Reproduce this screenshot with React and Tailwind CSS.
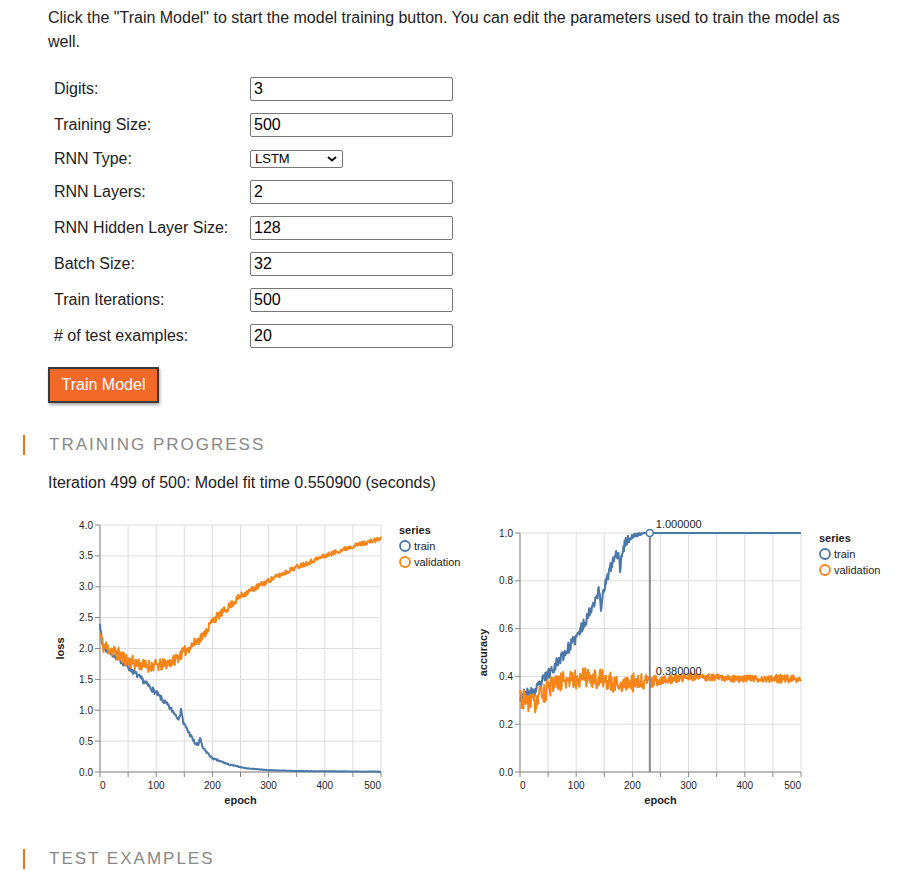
import React from "react";

const BLUE = "#4c78a8";
const ORANGE = "#f58518";

function makeRng(seed) {
  let a = seed;
  return () => {
    a |= 0;
    a = (a + 0x6d2b79f5) | 0;
    let t = Math.imul(a ^ (a >>> 15), 1 | a);
    t = (t + Math.imul(t ^ (t >>> 7), 61 | t)) ^ t;
    return ((t ^ (t >>> 14)) >>> 0) / 4294967296;
  };
}

function interp(keys, e) {
  for (let i = 1; i < keys.length; i++) {
    if (e <= keys[i][0]) {
      const [xa, ya] = keys[i - 1];
      const [xb, yb] = keys[i];
      return ya + ((yb - ya) * (e - xa)) / (xb - xa);
    }
  }
  return keys[keys.length - 1][1];
}

function series(keys, noise, seed, max) {
  const r = makeRng(seed);
  const out = [];
  for (let e = 0; e <= 500; e++) {
    let v = interp(keys, e) + (r() - 0.5) * 2 * interp(noise, e);
    if (max !== undefined) v = Math.min(v, max);
    out.push(Math.max(v, 0));
  }
  return out;
}

const lossTrain = series(
  [[0, 2.45], [3, 2.1], [8, 2.0], [30, 1.86], [60, 1.62], [100, 1.28], [130, 0.98], [142, 0.86], [144, 1.05], [148, 0.8], [170, 0.45], [175, 0.44], [178, 0.56], [182, 0.4], [200, 0.22], [230, 0.12], [260, 0.06], [300, 0.03], [350, 0.015], [500, 0.005]],
  [[0, 0.05], [140, 0.04], [200, 0.015], [260, 0.004], [500, 0.002]],
  7
);
const lossValid = series(
  [[0, 2.25], [5, 2.05], [20, 1.98], [50, 1.8], [80, 1.72], [110, 1.73], [130, 1.8], [150, 1.95], [170, 2.1], [185, 2.22], [200, 2.45], [220, 2.6], [250, 2.85], [300, 3.1], [350, 3.32], [400, 3.5], [450, 3.66], [500, 3.78]],
  [[0, 0.12], [100, 0.1], [200, 0.07], [300, 0.04], [500, 0.035]],
  11
);
const accTrain = series(
  [[0, 0.32], [25, 0.33], [40, 0.38], [60, 0.44], [80, 0.5], [100, 0.56], [120, 0.65], [135, 0.73], [141, 0.76], [144, 0.68], [148, 0.76], [165, 0.88], [174, 0.92], [178, 0.85], [182, 0.93], [190, 0.97], [205, 0.99], [222, 1.0], [500, 1.0]],
  [[0, 0.025], [190, 0.022], [215, 0.004], [225, 0], [500, 0]],
  23,
  1.0
);
const accValid = series(
  [[0, 0.31], [10, 0.3], [25, 0.285], [40, 0.33], [60, 0.36], [80, 0.385], [100, 0.39], [120, 0.4], [150, 0.385], [170, 0.37], [200, 0.375], [230, 0.38], [260, 0.385], [300, 0.4], [350, 0.395], [400, 0.39], [500, 0.39]],
  [[0, 0.045], [200, 0.04], [250, 0.018], [440, 0.014], [470, 0.02], [500, 0.012]],
  31
);

function Chart({ width, x0, x1, yTop, yBot, yMax, yStep, yTitle, titleX, legendX, legendY, train, valid, children }) {
  const sx = (e) => x0 + (e / 500) * (x1 - x0);
  const sy = (v) => yBot - (v / yMax) * (yBot - yTop);
  const path = (data) =>
    data.map((v, i) => `${i ? "L" : "M"}${sx(i).toFixed(2)},${sy(v).toFixed(2)}`).join("");
  const yTicks = [];
  for (let v = 0; v <= yMax + 1e-9; v += yStep) yTicks.push(v);
  const xTicks = [];
  for (let e = 0; e <= 500; e += 50) xTicks.push(e);
  const midY = (yTop + yBot) / 2;

  return (
    <svg width={width} height="305" className="block shrink-0">
      {xTicks.map((e) => (
        <line key={"gx" + e} x1={sx(e)} x2={sx(e)} y1={yTop} y2={yBot} stroke="#ddd" />
      ))}
      {yTicks.map((v) => (
        <line key={"gy" + v} x1={x0} x2={x1} y1={sy(v)} y2={sy(v)} stroke="#ddd" />
      ))}
      <line x1={x0} x2={x0} y1={yTop} y2={yBot} stroke="#888" />
      <line x1={x0} x2={x1} y1={yBot} y2={yBot} stroke="#888" />
      {yTicks.map((v) => (
        <g key={"ty" + v}>
          <line x1={x0 - 5} x2={x0} y1={sy(v)} y2={sy(v)} stroke="#888" />
          <text x={x0 - 7} y={sy(v) + 3.5} textAnchor="end" fontSize="10" fill="#222">
            {v.toFixed(1)}
          </text>
        </g>
      ))}
      {xTicks.map((e) => (
        <line key={"tx" + e} x1={sx(e)} x2={sx(e)} y1={yBot} y2={yBot + 5} stroke="#888" />
      ))}
      {[0, 100, 200, 300, 400, 500].map((e) => (
        <text
          key={"lx" + e}
          x={sx(e)}
          y={yBot + 17}
          textAnchor={e === 0 ? "start" : e === 500 ? "end" : "middle"}
          fontSize="10"
          fill="#222"
        >
          {e}
        </text>
      ))}
      <text x={(x0 + x1) / 2} y={yBot + 32} textAnchor="middle" fontSize="11" fontWeight="bold" fill="#222">
        epoch
      </text>
      <text
        x={titleX}
        y={midY}
        textAnchor="middle"
        fontSize="11"
        fontWeight="bold"
        fill="#222"
        transform={`rotate(-90 ${titleX} ${midY})`}
      >
        {yTitle}
      </text>
      <path d={path(train)} fill="none" stroke={BLUE} strokeWidth="2" strokeLinejoin="round" />
      <path d={path(valid)} fill="none" stroke={ORANGE} strokeWidth="2" strokeLinejoin="round" />
      {children && children(sx, sy)}
      <text x={legendX} y={legendY} fontSize="11" fontWeight="bold" fill="#222">
        series
      </text>
      <circle cx={legendX + 6} cy={legendY + 12} r="5" fill="none" stroke={BLUE} strokeWidth="1.8" />
      <text x={legendX + 15} y={legendY + 16} fontSize="11" fill="#222">
        train
      </text>
      <circle cx={legendX + 6} cy={legendY + 28} r="5" fill="none" stroke={ORANGE} strokeWidth="1.8" />
      <text x={legendX + 15} y={legendY + 32} fontSize="11" fill="#222">
        validation
      </text>
    </svg>
  );
}

const fields = [
  { label: "Digits:", value: "3" },
  { label: "Training Size:", value: "500" },
  { label: "RNN Type:", select: true },
  { label: "RNN Layers:", value: "2" },
  { label: "RNN Hidden Layer Size:", value: "128" },
  { label: "Batch Size:", value: "32" },
  { label: "Train Iterations:", value: "500" },
  { label: "# of test examples:", value: "20" },
];

function SectionTitle({ children }) {
  return (
    <div className="ml-[23px] flex h-[20px] items-center border-l-2 border-[#e8731e] pl-[24px]">
      <span className="text-[17px] leading-[20px] tracking-[2px] text-[#888]">{children}</span>
    </div>
  );
}

export default function App() {
  return (
    <div className="min-h-screen bg-white pt-[6px] font-['Liberation_Sans',Arial,sans-serif] text-[16px] text-[#222]">
      <p className="w-[848px] pl-[48px] leading-[24px]">
        Click the "Train Model" to start the model training button. You can edit the parameters used to train the model as well.
      </p>

      <div className="mt-[23px] flex flex-col gap-[12px]">
        {fields.map((f) => (
          <div key={f.label} className={`flex items-center pl-[54px] ${f.select ? "mt-[1px]" : ""}`}>
            <label className="w-[196px] leading-[18px]">{f.label}</label>
            {f.select ? (
              <div className="relative h-[18px] w-[93px]">
                <select
                  defaultValue="LSTM"
                  className="block h-[18px] w-[93px] appearance-none rounded-[2px] border border-[#767676] bg-white pl-[4px] text-[13px] leading-[16px] text-black"
                >
                  <option>LSTM</option>
                  <option>GRU</option>
                  <option>SimpleRNN</option>
                </select>
                <svg
                  viewBox="0 0 10 6"
                  className="pointer-events-none absolute right-[6px] top-[6px] h-[6px] w-[10px]"
                >
                  <path d="M1 1l4 3.5L9 1" fill="none" stroke="#111" strokeWidth="2" />
                </svg>
              </div>
            ) : (
              <input
                defaultValue={f.value}
                className="block h-[24px] w-[203px] rounded-[2px] border border-[#767676] bg-white pl-[3px] text-[16px] text-black"
              />
            )}
          </div>
        ))}
      </div>

      <button
        type="button"
        className="ml-[48px] mt-[19px] block h-[36px] w-[111px] border-2 border-[#3a3a3a] bg-[#f26a2a] text-[16px] text-white shadow-[1px_2px_3px_rgba(0,0,0,0.35)]"
      >
        Train Model
      </button>

      <div className="mt-[32px]">
        <SectionTitle>TRAINING PROGRESS</SectionTitle>
      </div>

      <p className="mt-[16px] pl-[48px] leading-[24px]">
        Iteration 499 of 500: Model fit time 0.550900 (seconds)
      </p>

      <div className="mt-[15px] flex pl-[48px]">
        <Chart
          width={420}
          x0={52}
          x1={333}
          yTop={15}
          yBot={262}
          yMax={4}
          yStep={0.5}
          yTitle="loss"
          titleX={16}
          legendX={351}
          legendY={24}
          train={lossTrain}
          valid={lossValid}
        />
        <Chart
          width={445}
          x0={52}
          x1={333}
          yTop={23}
          yBot={262}
          yMax={1}
          yStep={0.2}
          yTitle="accuracy"
          titleX={19}
          legendX={351}
          legendY={32}
          train={accTrain}
          valid={accValid}
        >
          {(sx, sy) => (
            <g>
              <line x1={sx(231)} x2={sx(231)} y1={23} y2={262} stroke="#888" strokeWidth="2" />
              <circle cx={sx(231)} cy={sy(1)} r="3.5" fill="white" stroke={BLUE} strokeWidth="1.6" />
              <text x={sx(231) + 6} y={18} fontSize="11" fill="#222">
                1.000000
              </text>
              <text x={sx(231) + 6} y={165} fontSize="11" fill="#222">
                0.380000
              </text>
            </g>
          )}
        </Chart>
      </div>

      <div className="mt-[34px] pb-[20px]">
        <SectionTitle>TEST EXAMPLES</SectionTitle>
      </div>
    </div>
  );
}
